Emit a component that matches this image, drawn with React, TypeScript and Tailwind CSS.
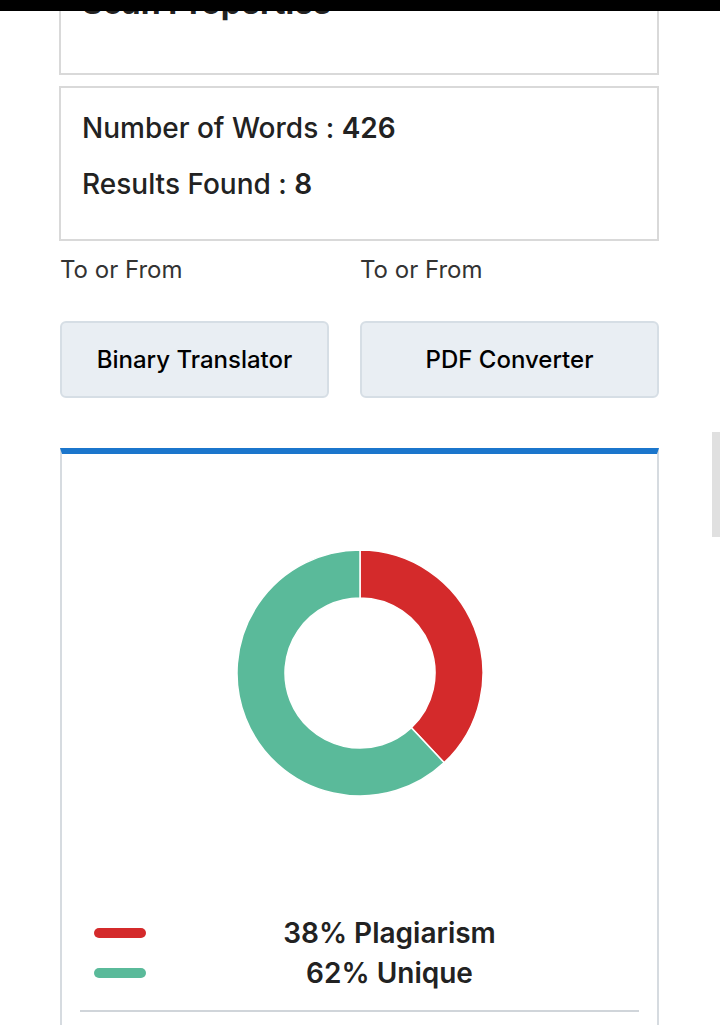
import { ReactNode } from 'react';

const font = { fontFamily: 'Inter, "Noto Sans", sans-serif' };

// donut slice from angle a0 to a1 (degrees, 0 = top, clockwise)
function arcPath(cx: number, cy: number, r: number, ri: number, a0: number, a1: number) {
  const rad = (a: number) => ((a - 90) * Math.PI) / 180;
  const p = (rr: number, a: number) => [cx + rr * Math.cos(rad(a)), cy + rr * Math.sin(rad(a))];
  const large = a1 - a0 > 180 ? 1 : 0;
  const [x0, y0] = p(r, a0);
  const [x1, y1] = p(r, a1);
  const [x2, y2] = p(ri, a1);
  const [x3, y3] = p(ri, a0);
  return `M${x0} ${y0} A${r} ${r} 0 ${large} 1 ${x1} ${y1} L${x2} ${y2} A${ri} ${ri} 0 ${large} 0 ${x3} ${y3} Z`;
}

function Donut({ plag }: { plag: number }) {
  const split = (plag / 100) * 360;
  return (
    <svg width="248" height="248" viewBox="0 0 248 248">
      <path d={arcPath(124, 124, 123, 75, 0, split)} fill="#d42a2b" stroke="#fff" strokeWidth="1.5" />
      <path d={arcPath(124, 124, 123, 75, split, 360)} fill="#5aba9a" stroke="#fff" strokeWidth="1.5" />
    </svg>
  );
}

function Stat({ label, value }: { label: string; value: ReactNode }) {
  return (
    <div className="text-[28px] leading-[56px] text-[#222]">
      <span className="font-medium">{label} : </span>
      <span className="font-semibold">{value}</span>
    </div>
  );
}

function LinkBox({ caption, title }: { caption: string; title: string }) {
  return (
    <div className="flex flex-col">
      <div className="text-[24px] leading-[32px] text-[#333] h-[32px] mb-[35px]">{caption}</div>
      <button className="h-[77px] rounded-[6px] border-2 border-[#d6dee5] bg-[#e9eef3] text-[24px] font-medium text-black">
        {title}
      </button>
    </div>
  );
}

export default function App() {
  return (
    <div className="relative min-h-[1025px] bg-white overflow-hidden" style={font}>
      <div className="absolute top-0 left-0 right-0 h-[11px] bg-black z-10" />
      <div className="absolute top-[432px] right-0 w-[8px] h-[105px] bg-[#e0e0e0]" />

      <div className="ml-[59px] w-[600px]">
        <div className="-mt-[30px] border-2 border-[#d9d9d9] px-[21px] pt-[16px] h-[105px]">
          <h2 className="text-[32px] leading-[30px] font-bold text-[#222]">Scan Properties</h2>
        </div>

        <div className="mt-[11px] border-2 border-[#d9d9d9] px-[21px] pt-[12px] h-[155px]">
          <Stat label="Number of Words" value="426" />
          <Stat label="Results Found" value="8" />
        </div>

        <div className="mt-[13px] grid grid-cols-[269px_299px] gap-[31px] pl-[1px]">
          <LinkBox caption="To or From" title="Binary Translator" />
          <LinkBox caption="To or From" title="PDF Converter" />
        </div>

        <div className="mt-[50px] ml-[1px] w-[599px] border-t-[6px] border-t-[#1b76cc] border-x-2 border-x-[#d6dbe0]">
          <div className="flex justify-center pt-[95px]">
            <Donut plag={38} />
          </div>
          <div className="mt-[116px] flex items-center pl-[32px] pr-[32px]">
            <div className="flex flex-col gap-[30px] w-[52px]">
              <div className="h-[10px] rounded-full bg-[#d42a2b]" />
              <div className="h-[10px] rounded-full bg-[#5aba9a]" />
            </div>
            <div className="flex-1 ml-[8px] text-center text-[28px] leading-[40px] font-semibold text-[#222]">
              <div>38% Plagiarism</div>
              <div>62% Unique</div>
            </div>
          </div>
          <div className="mx-[18px] mt-[17px] h-[2px] bg-[#d0d5da]" />
          <div className="h-[40px]" />
        </div>
      </div>
    </div>
  );
}
